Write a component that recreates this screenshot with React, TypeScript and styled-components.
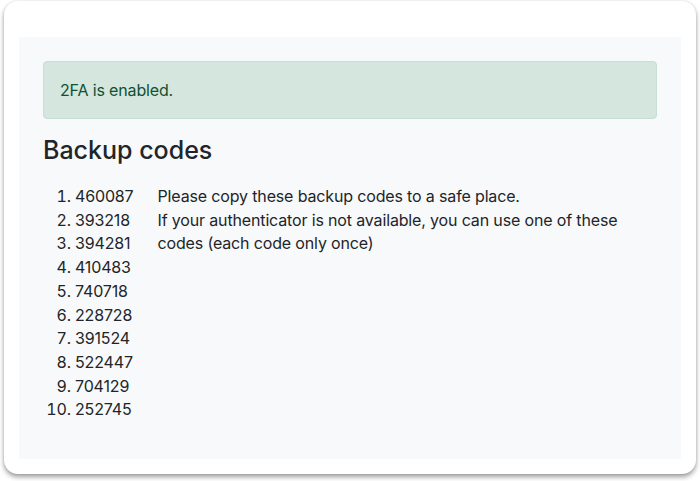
import styled, { createGlobalStyle } from 'styled-components';

const GlobalStyle = createGlobalStyle`
  html, body {
    margin: 0;
    padding: 0;
    background: #ffffff;
  }
  body {
    font-family: Inter, "Liberation Sans", sans-serif;
    color: #212529;
  }
`;

const Frame = styled.div`
  padding: 1px 4px 7px 4px;
`;

const Card = styled.section`
  box-sizing: border-box;
  height: 473px;
  padding: 36px 15px 15px;
  border-radius: 14px;
  background: #ffffff;
  box-shadow: 0 3px 5px rgba(0, 0, 0, 0.38), 0 0 2px rgba(0, 0, 0, 0.12);
`;

const Panel = styled.div`
  box-sizing: border-box;
  height: 100%;
  padding: 24px;
  background: #f8f9fa;
`;

const Alert = styled.div`
  padding: 16px;
  margin-bottom: 16px;
  border: 1px solid #c6dfd2;
  border-radius: 4px;
  background: #d4e6dd;
  color: #0f5132;
  font-size: 16px;
  line-height: 24px;
  letter-spacing: -0.15px;
`;

const Title = styled.h3`
  margin: 4px 0 20px;
  font-size: 25px;
  font-weight: 500;
  line-height: 30px;
  color: #212529;
`;

const Row = styled.div`
  display: flex;
  gap: 24px;
  font-size: 16px;
  line-height: 23.7px;
  letter-spacing: -0.15px;
`;

const Codes = styled.ol`
  margin: 0;
  padding-left: 32px;
  flex: 0 0 auto;
`;

const Note = styled.div`
  flex: 1;
  max-width: 480px;
`;

const Line = styled.p`
  margin: 0;
`;

const codes = ['460087', '393218', '394281', '410483', '740718', '228728', '391524', '522447', '704129', '252745'];

const App = () => {
  return (
    <Frame>
      <GlobalStyle />
      <Card>
        <Panel>
          <Alert>2FA is enabled.</Alert>
          <Title>Backup codes</Title>
          <Row>
            <Codes>
              {codes.map((c) => (
                <li key={c}>{c}</li>
              ))}
            </Codes>
            <Note>
              <Line>Please copy these backup codes to a safe place.</Line>
              <Line>If your authenticator is not available, you can use one of these codes (each code only once)</Line>
            </Note>
          </Row>
        </Panel>
      </Card>
    </Frame>
  );
};

export default App;
